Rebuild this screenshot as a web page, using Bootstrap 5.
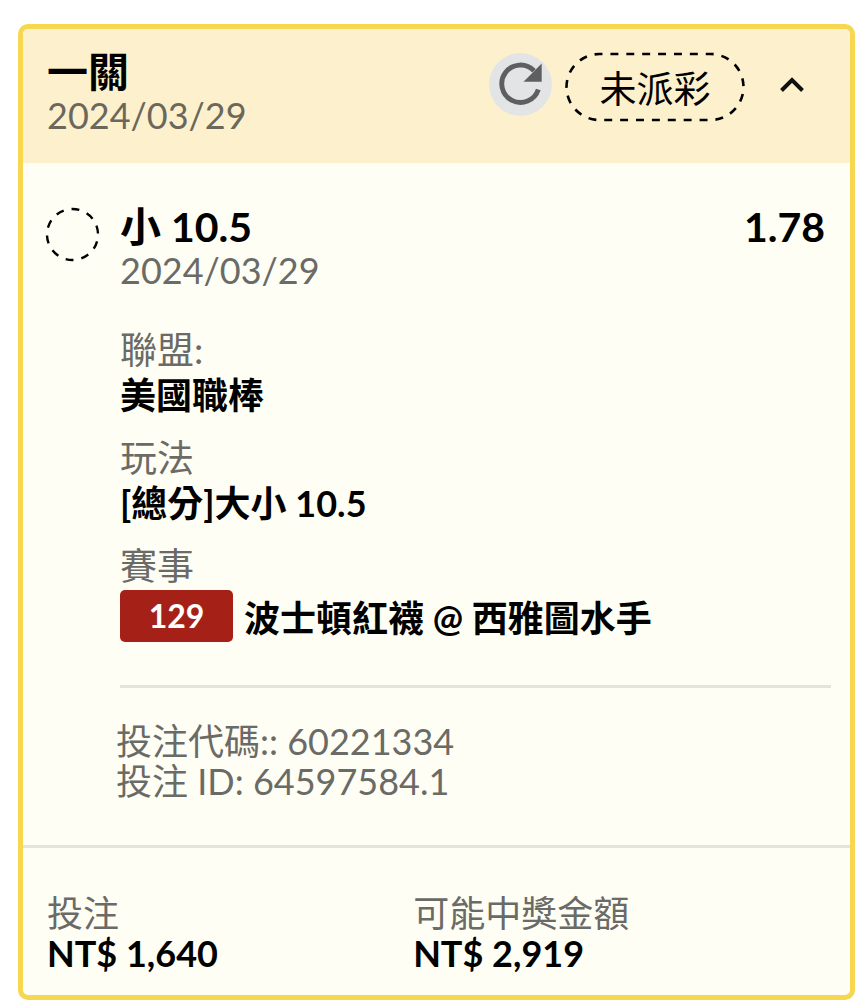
<!DOCTYPE html>
<html lang="zh-Hant">
<head>
<meta charset="utf-8">
<meta name="viewport" content="width=device-width, initial-scale=1">
<title>投注紀錄</title>
<link href="https://cdn.jsdelivr.net/npm/bootstrap@5.3.0/dist/css/bootstrap.min.css" rel="stylesheet">
<style>
  body { background: #fff; color: #000; font: 400 36px/40px Lato, "Noto Sans CJK TC", sans-serif; }
  .ticket-wrap { padding: 24px 12px 0 18px; }
  .ticket { border: 5px solid #f6d74f; border-radius: 10px; background: #fefef4; color: #000; overflow: hidden; }
  .ticket-head { background: #fdf1cd; padding: 20px 45px 28px 24px; }
  .ticket-title { font-size: 41px; line-height: 46px; font-weight: 700; margin: 0; }
  .muted { color: #6a6a66; }
  .ticket-head .muted { color: #6b675a; }
  .icon-btn { padding: 0; border: 0; background: none; line-height: 0; }
  .refresh { margin-bottom: 2px; }
  .state { font-size: 37px; width: 180px; height: 70px; line-height: 74px; margin: 3px 34px 0 13px; }
  .leg { padding: 41px 24px 0 22px; }
  .leg-mark { margin: 3px 20px 0 0; }
  .leg-date { margin-bottom: 38px; }
  .leg-label { font-size: 37px; line-height: 44px; font-weight: 400; }
  .leg-value { line-height: 46px; margin-bottom: 18px; font-weight: 700; }
  .match-row { min-height: 52px; margin: 2px 0 43px; font-weight: 700; }
  .match-row .teams { padding-top: 4px; }
  .match-no { background: #a52117; color: #fff; width: 113px; line-height: 52px; font-size: 32px; border-radius: 5px; margin-right: 11px; }
  .leg-detail { margin-right: -5px; }
  .codes { border-top: 3px solid #e4e4dc; padding: 33px 0 44px; }
  .codes div { margin-left: -4px; }
  .price { padding-right: 6px; }
  .ticket-foot { border-top: 3px solid #e4e4dc; padding: 45px 24px 22px; }
  .stake { flex: 0 0 47%; }
</style>
</head>
<body>
<main class="ticket-wrap">
  <article class="ticket">
    <header class="ticket-head d-flex justify-content-between">
      <div>
        <h1 class="ticket-title">一關</h1>
        <div class="muted">2024/03/29</div>
      </div>
      <div class="d-flex align-items-center align-self-start">
        <button class="icon-btn refresh" type="button" aria-label="重新整理">
          <svg width="63" height="63" viewBox="0 0 63 63">
            <circle cx="31.500" cy="31.500" r="31.500" fill="#e3e4e6"/>
            <path d="M49.300 36.500A18.700 18.700 0 1 1 45 17.800" fill="none" stroke="#5e5f61" stroke-width="4.900"/>
            <path d="M52.700 10.500V28.700H34.500Z" fill="#5e5f61"/>
          </svg>
        </button>
        <div class="state position-relative text-center">
          <svg class="position-absolute top-0 start-0" width="180" height="70" viewBox="0 0 180 70" aria-hidden="true">
            <rect x="1.500" y="2" width="177" height="66" rx="33" fill="none" stroke="#000" stroke-width="2.600" stroke-dasharray="8 8" stroke-dashoffset="5" pathLength="432"/>
          </svg>
          未派彩
        </div>
        <button class="icon-btn" type="button" aria-label="收合">
          <svg width="26" height="24" viewBox="0 0 26 24"><path d="M2.500 16.500L13 6L23.500 16.500" fill="none" stroke="#111" stroke-width="4"/></svg>
        </button>
      </div>
    </header>

    <section class="leg d-flex">
      <svg class="leg-mark flex-shrink-0" width="55" height="55" viewBox="0 0 55 55" aria-hidden="true">
        <circle cx="27.500" cy="27.500" r="25.500" fill="none" stroke="#000" stroke-width="2.400" stroke-dasharray="8 8" stroke-dashoffset="-7" pathLength="160"/>
      </svg>
      <div class="leg-detail flex-grow-1">
        <div class="ticket-title d-flex justify-content-between"><span>小 10.5</span><span class="price">1.78</span></div>
        <div class="muted leg-date">2024/03/29</div>
        <dl class="mb-0">
          <dt class="leg-label muted">聯盟:</dt>
          <dd class="leg-value">美國職棒</dd>
          <dt class="leg-label muted">玩法</dt>
          <dd class="leg-value">[總分]大小 10.5</dd>
          <dt class="leg-label muted">賽事</dt>
          <dd class="match-row d-flex align-items-center"><span class="match-no text-center">129</span><span class="teams">波士頓紅襪 @ 西雅圖水手</span></dd>
        </dl>
        <div class="codes muted">
          <div>投注代碼:: 60221334</div>
          <div>投注 ID: 64597584.1</div>
        </div>
      </div>
    </section>

    <footer class="ticket-foot d-flex">
      <div class="stake">
        <div class="muted">投注</div>
        <div class="fw-bold">NT$ 1,640</div>
      </div>
      <div>
        <div class="muted">可能中獎金額</div>
        <div class="fw-bold">NT$ 2,919</div>
      </div>
    </footer>
  </article>
</main>
<script src="https://cdn.jsdelivr.net/npm/bootstrap@5.3.0/dist/js/bootstrap.bundle.min.js"></script>
</body>
</html>
